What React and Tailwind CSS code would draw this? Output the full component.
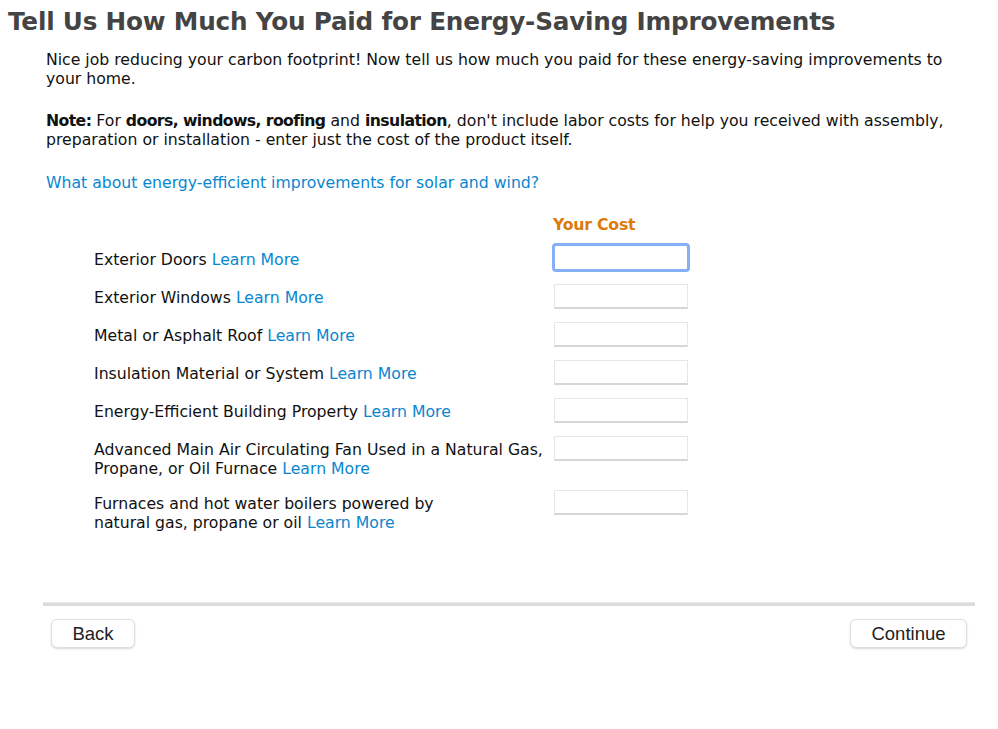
import React, { useState } from 'react'

const items = [
  { label: ['Exterior Doors'], focus: true },
  { label: ['Exterior Windows'] },
  { label: ['Metal or Asphalt Roof'] },
  { label: ['Insulation Material or System'] },
  { label: ['Energy-Efficient Building Property'] },
  { label: ['Advanced Main Air Circulating Fan Used in a Natural Gas,', 'Propane, or Oil Furnace'] },
  { label: ['Furnaces and hot water boilers powered by', 'natural gas, propane or oil'] },
]

const LearnMore = () => <a className="text-[#0a86cf] cursor-pointer">Learn More</a>

const CostRow = ({ item, value, onChange }) => {
  const two = item.label.length > 1
  return (
    <div className={`flex items-start ${two ? 'h-[54px]' : 'h-[38px]'}`}>
      <div className="pl-[94px] w-[553px] pt-[4px] leading-[19px] whitespace-nowrap">
        {two ? (
          <>
            {item.label[0]}
            <br />
            {item.label[1]} <LearnMore />
          </>
        ) : (
          <>
            {item.label[0]} <LearnMore />
          </>
        )}
      </div>
      {item.focus ? (
        <input
          value={value}
          onChange={onChange}
          className="w-[138px] h-[29px] -ml-[1px] -mt-[3px] rounded-[4px] border-[3px] border-[#86aff6] bg-white outline-none"
        />
      ) : (
        <input
          value={value}
          onChange={onChange}
          className="w-[134px] h-[25px] ml-[1px] border border-[#e6e6e6] border-b-2 border-b-[#d6d6d6] bg-white outline-none"
        />
      )}
    </div>
  )
}

const App = () => {
  const [costs, setCosts] = useState(items.map(() => ''))

  return (
    <div className="w-[998px] h-[729px] bg-white text-[#111] font-['DejaVu_Sans',sans-serif] text-[15.7px]">
      <h1 className="pl-[8px] pt-[6px] text-[24.7px] leading-[32px] font-bold text-[#444] tracking-[-0.2px]">
        Tell Us How Much You Paid for Energy-Saving Improvements
      </h1>

      <div className="pl-[46px] pr-[20px] mt-[12px] whitespace-nowrap">
        <p className="leading-[19px]">
          Nice job reducing your carbon footprint! Now tell us how much you paid for these energy-saving improvements to
          <br />
          your home.
        </p>
        <p className="leading-[19px] mt-[23px]">
          <b className="tracking-[-0.6px]">Note:</b> For <b className="tracking-[-0.6px]">doors, windows, roofing</b> and{' '}
          <b className="tracking-[-0.6px]">insulation</b>, don't include labor costs for help you received with assembly,
          <br />
          preparation or installation - enter just the cost of the product itself.
        </p>
        <p className="mt-[24px] leading-[19px] text-[#0a86cf]">What about energy-efficient improvements for solar and wind?</p>
      </div>

      {/* header of the cost column */}
      <div className="pl-[553px] mt-[23px] h-[22px] text-[#db7b0b] font-bold text-[15.7px] leading-[20px] tracking-[-0.2px]">Your Cost</div>

      <div className="mt-[9px]">
        {items.map((item, idx) => (
          <CostRow
            key={item.label[0]}
            item={item}
            value={costs[idx]}
            onChange={(e) => {
              const next = [...costs]
              next[idx] = e.target.value
              setCosts(next)
            }}
          />
        ))}
      </div>

      <div className="mx-[43px] w-[932px] mt-[58px] h-[4px] bg-[#dcdcdc] border-t border-[#e8e8e8]"></div>

      <div className="flex justify-between pl-[51px] pr-[31px] mt-[13px] font-['Liberation_Sans',sans-serif] text-[18.5px]">
        <button className="w-[84px] h-[29px] rounded-[6px] border border-[#dedede] bg-white shadow-[0_1px_2px_rgba(0,0,0,0.15)] text-[#222]">
          Back
        </button>
        <button className="w-[117px] h-[29px] rounded-[6px] border border-[#dedede] bg-white shadow-[0_1px_2px_rgba(0,0,0,0.15)] text-[#222]">
          Continue
        </button>
      </div>
    </div>
  )
}

export default App
